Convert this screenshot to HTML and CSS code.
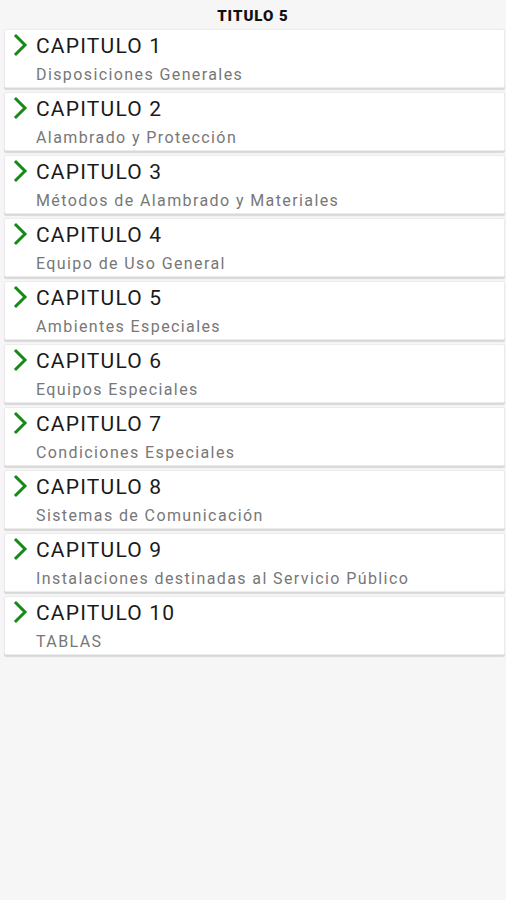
FILE: index.html
```html
<!DOCTYPE html>
<html lang="es">
<head>
<meta charset="utf-8">
<link rel="stylesheet" href="styles.css">
</head>
<body>
<header class="bar">TITULO 5</header>
<ul class="list">
  <li class="card"><svg class="chev" viewBox="0 0 16 24"><path d="M3 3 L12 12 L3 21"/></svg><div class="txt"><div class="title">CAPITULO 1</div><div class="sub">Disposiciones Generales</div></div></li>
  <li class="card"><svg class="chev" viewBox="0 0 16 24"><path d="M3 3 L12 12 L3 21"/></svg><div class="txt"><div class="title">CAPITULO 2</div><div class="sub">Alambrado y Protección</div></div></li>
  <li class="card"><svg class="chev" viewBox="0 0 16 24"><path d="M3 3 L12 12 L3 21"/></svg><div class="txt"><div class="title">CAPITULO 3</div><div class="sub">Métodos de Alambrado y Materiales</div></div></li>
  <li class="card"><svg class="chev" viewBox="0 0 16 24"><path d="M3 3 L12 12 L3 21"/></svg><div class="txt"><div class="title">CAPITULO 4</div><div class="sub">Equipo de Uso General</div></div></li>
  <li class="card"><svg class="chev" viewBox="0 0 16 24"><path d="M3 3 L12 12 L3 21"/></svg><div class="txt"><div class="title">CAPITULO 5</div><div class="sub">Ambientes Especiales</div></div></li>
  <li class="card"><svg class="chev" viewBox="0 0 16 24"><path d="M3 3 L12 12 L3 21"/></svg><div class="txt"><div class="title">CAPITULO 6</div><div class="sub">Equipos Especiales</div></div></li>
  <li class="card"><svg class="chev" viewBox="0 0 16 24"><path d="M3 3 L12 12 L3 21"/></svg><div class="txt"><div class="title">CAPITULO 7</div><div class="sub">Condiciones Especiales</div></div></li>
  <li class="card"><svg class="chev" viewBox="0 0 16 24"><path d="M3 3 L12 12 L3 21"/></svg><div class="txt"><div class="title">CAPITULO 8</div><div class="sub">Sistemas de Comunicación</div></div></li>
  <li class="card"><svg class="chev" viewBox="0 0 16 24"><path d="M3 3 L12 12 L3 21"/></svg><div class="txt"><div class="title">CAPITULO 9</div><div class="sub">Instalaciones destinadas al Servicio Público</div></div></li>
  <li class="card"><svg class="chev" viewBox="0 0 16 24"><path d="M3 3 L12 12 L3 21"/></svg><div class="txt"><div class="title">CAPITULO 10</div><div class="sub">TABLAS</div></div></li>
</ul>
</body>
</html>
```
FILE: styles.css
```css
html, body {
  margin: 0;
  padding: 0;
  background: #f6f6f6;
  font-family: Roboto, "Liberation Sans", sans-serif;
  width: 506px;
  height: 900px;
}
.bar {
  height: 28px;
  display: flex;
  align-items: center;
  justify-content: center;
  font-weight: 900;
  font-size: 15px;
  letter-spacing: 1px;
  color: #111;
  padding-top: 3px;
  box-sizing: border-box;
}
.list {
  list-style: none;
  margin: 0;
  padding: 1px 1px 0 4px;
  display: flex;
  flex-direction: column;
  gap: 4px;
}
.card {
  background: #fff;
  height: 59px;
  box-sizing: border-box;
  display: flex;
  align-items: flex-start;
  border: 1px solid #ececec;
  border-radius: 2px;
  box-shadow: 0 2px 1px rgba(0,0,0,0.12);
}
.chev {
  width: 16px;
  height: 24px;
  margin: 3px 0 0 8px;
  flex: none;
}
.chev path {
  fill: none;
  stroke: #168a16;
  stroke-width: 3;
  stroke-linecap: square;
}
.txt {
  margin-left: 7px;
  padding-top: 3px;
}
.title {
  font-size: 21px;
  line-height: 27px;
  color: #1a1a1a;
  letter-spacing: 1.2px;
}
.sub {
  font-size: 16px;
  line-height: 22px;
  color: #777;
  letter-spacing: 1.4px;
  margin-top: 4px;
}
```
